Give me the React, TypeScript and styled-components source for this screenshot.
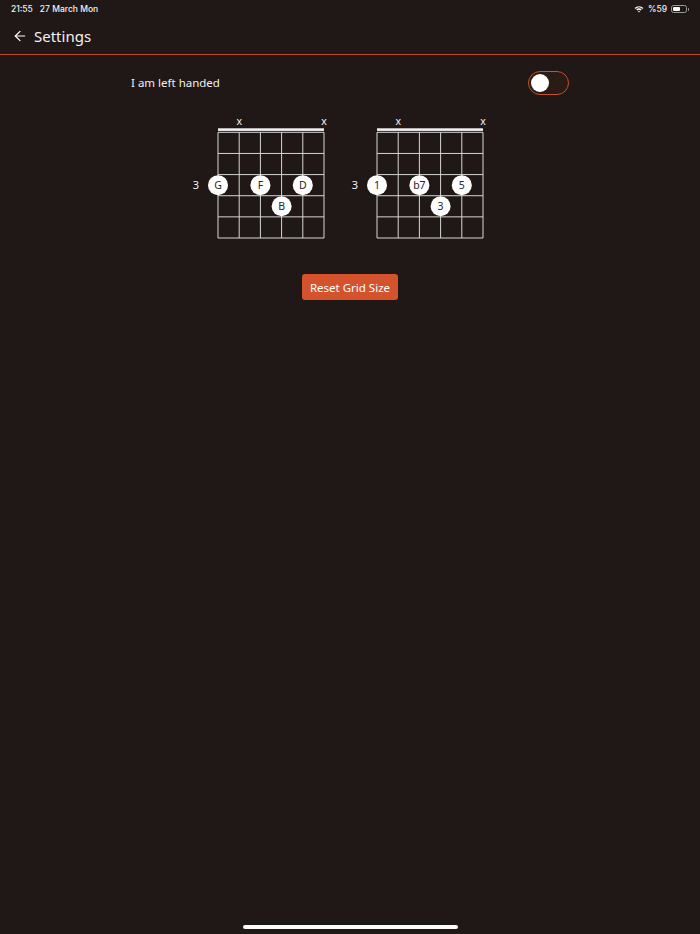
import React, { useState } from "react";
import styled, { createGlobalStyle } from "styled-components";
import { ArrowLeft } from "lucide-react";

const GlobalStyle = createGlobalStyle`
  html, body {
    margin: 0;
    padding: 0;
    background: #201816;
  }
  body {
    font-family: "Noto Sans", "Open Sans", sans-serif;
    color: #f4efec;
  }
`;

const Page = styled.div`
  min-height: 934px;
  display: flex;
  flex-direction: column;
  background: #201816;
`;

const StatusBar = styled.div`
  height: 17px;
  padding: 0 10px 0 11px;
  display: flex;
  justify-content: space-between;
  align-items: center;
  font-family: Inter, "Noto Sans", sans-serif;
  font-size: 8.5px;
  font-weight: 500;
  color: #f2f2f2;
`;

const StatusGroup = styled.div`
  display: flex;
  align-items: center;
  gap: ${(p: { gap?: number }) => p.gap ?? 6}px;
`;

const Battery = styled.div`
  position: relative;
  width: 16px;
  height: 8px;
  border: 1px solid #9a9a9a;
  border-radius: 2.5px;
  box-sizing: border-box;
  padding: 1px;
  margin-right: 3px;
  &::after {
    content: "";
    position: absolute;
    right: -3px;
    top: 2px;
    width: 1.5px;
    height: 3px;
    background: #9a9a9a;
    border-radius: 0 1px 1px 0;
  }
`;

const BatteryFill = styled.div`
  height: 100%;
  background: #ffffff;
  border-radius: 1px;
`;

const Header = styled.header`
  height: 37px;
  display: flex;
  align-items: center;
  gap: 6px;
  padding-left: 12px;
  border-bottom: 1px solid #c4481f;
`;

const BackButton = styled.button`
  background: none;
  border: none;
  padding: 0;
  display: flex;
  color: #ffffff;
  cursor: pointer;
`;

const Title = styled.h1`
  margin: 0;
  font-size: 15px;
  font-weight: 400;
  color: #f6f1ee;
`;

const Content = styled.main`
  display: flex;
  flex-direction: column;
  align-items: center;
  padding-top: 16px;
`;

const SettingRow = styled.div`
  width: 438px;
  display: flex;
  justify-content: space-between;
  align-items: center;
`;

const Label = styled.span`
  font-size: 11.5px;
  line-height: 14px;
  margin-top: -1px;
  color: #f4efec;
`;

const Toggle = styled.button<{ $on: boolean }>`
  position: relative;
  width: 41px;
  height: 24px;
  border-radius: 12px;
  border: 1.5px solid #c8502a;
  background: #2b1b15;
  padding: 0;
  cursor: pointer;
  box-sizing: border-box;
  &::after {
    content: "";
    position: absolute;
    top: 1.5px;
    left: ${(p) => (p.$on ? "19px" : "1.5px")};
    width: 18px;
    height: 18px;
    border-radius: 50%;
    background: #ffffff;
  }
`;

const Diagrams = styled.div`
  display: flex;
  gap: 1px;
  margin-top: 17px;
  margin-left: 1px;
`;

const ResetButton = styled.button`
  margin-top: 32px;
  width: 96px;
  height: 26px;
  border: none;
  border-radius: 3px;
  background: #d4532c;
  color: #ffffff;
  font-family: "Noto Sans", sans-serif;
  font-size: 11.5px;
  cursor: pointer;
`;

const HomeIndicator = styled.div`
  margin: auto auto 5px;
  width: 215px;
  height: 4px;
  border-radius: 2px;
  background: #ffffff;
`;

type Dot = { string: number; fret: number; label: string };

type ChordProps = {
  muted: number[];
  baseFret: number;
  baseRow: number;
  dots: Dot[];
};

const GX = 26;
const SS = 21.2;
const GY = 20.3;
const FS = 21.14;

function Chord({ muted, baseFret, baseRow, dots }: ChordProps) {
  const strings = [0, 1, 2, 3, 4, 5];
  const frets = [0, 1, 2, 3, 4, 5];
  const right = GX + SS * 5;
  const bottom = GY + FS * 5;
  return (
    <svg width={158} height={130} viewBox="0 0 158 130">
      {muted.map((s) => (
        <text
          key={"m" + s}
          x={GX + s * SS}
          y={12.5}
          textAnchor="middle"
          fontSize={10.5}
          fill="#f2f2f2"
          fontFamily="Noto Sans, sans-serif"
        >
          x
        </text>
      ))}
      <rect x={GX} y={16.3} width={SS * 5} height={2.6} fill="#f2f2f2" />
      {frets.map((f) => (
        <line
          key={"f" + f}
          x1={GX}
          x2={right}
          y1={GY + f * FS}
          y2={GY + f * FS}
          stroke="#d6d6d6"
          strokeWidth={1}
        />
      ))}
      {strings.map((s) => (
        <line
          key={"s" + s}
          x1={GX + s * SS}
          x2={GX + s * SS}
          y1={GY}
          y2={bottom}
          stroke="#d6d6d6"
          strokeWidth={1}
        />
      ))}
      <text
        x={4}
        y={GY + (baseRow - 0.5) * FS + 4}
        textAnchor="middle"
        fontSize={11}
        fill="#f2f2f2"
        fontFamily="Noto Sans, sans-serif"
      >
        {baseFret}
      </text>
      {dots.map((d) => {
        const cx = GX + d.string * SS;
        const cy = GY + (d.fret - 0.5) * FS;
        return (
          <g key={d.label}>
            <circle cx={cx} cy={cy} r={10} fill="#ffffff" />
            <text
              x={cx}
              y={cy + 3.8}
              textAnchor="middle"
              fontSize={10.5}
              fill="#2a2422"
              fontFamily="Noto Sans, sans-serif"
            >
              {d.label}
            </text>
          </g>
        );
      })}
    </svg>
  );
}

function WifiIcon() {
  return (
    <svg width="10" height="8" viewBox="0 0 10 8">
      <path d="M0.6 2.9 A6.4 6.4 0 0 1 9.4 2.9 L8.4 3.9 A5 5 0 0 0 1.6 3.9 Z" fill="#fff" />
      <path d="M2.3 4.6 A4 4 0 0 1 7.7 4.6 L6.7 5.6 A2.6 2.6 0 0 0 3.3 5.6 Z" fill="#fff" />
      <path d="M4 6.3 A1.5 1.5 0 0 1 6 6.3 L5 7.4 Z" fill="#fff" />
    </svg>
  );
}

export default function App() {
  const [leftHanded, setLeftHanded] = useState(false);
  return (
    <Page>
      <GlobalStyle />
      <StatusBar>
        <StatusGroup gap={7}>
          <span>21:55</span>
          <span>27 March Mon</span>
        </StatusGroup>
        <StatusGroup gap={4}>
          <WifiIcon />
          <span>%59</span>
          <Battery>
            <BatteryFill style={{ width: "59%" }} />
          </Battery>
        </StatusGroup>
      </StatusBar>
      <Header>
        <BackButton aria-label="Back">
          <ArrowLeft size={16} strokeWidth={1.8} />
        </BackButton>
        <Title>Settings</Title>
      </Header>
      <Content>
        <SettingRow>
          <Label>I am left handed</Label>
          <Toggle
            $on={leftHanded}
            aria-label="I am left handed"
            onClick={() => setLeftHanded((v) => !v)}
          />
        </SettingRow>
        <Diagrams>
          <Chord
            muted={[1, 5]}
            baseFret={3}
            baseRow={3}
            dots={[
              { string: 0, fret: 3, label: "G" },
              { string: 2, fret: 3, label: "F" },
              { string: 4, fret: 3, label: "D" },
              { string: 3, fret: 4, label: "B" },
            ]}
          />
          <Chord
            muted={[1, 5]}
            baseFret={3}
            baseRow={3}
            dots={[
              { string: 0, fret: 3, label: "1" },
              { string: 2, fret: 3, label: "b7" },
              { string: 4, fret: 3, label: "5" },
              { string: 3, fret: 4, label: "3" },
            ]}
          />
        </Diagrams>
        <ResetButton>Reset Grid Size</ResetButton>
      </Content>
      <HomeIndicator />
    </Page>
  );
}
